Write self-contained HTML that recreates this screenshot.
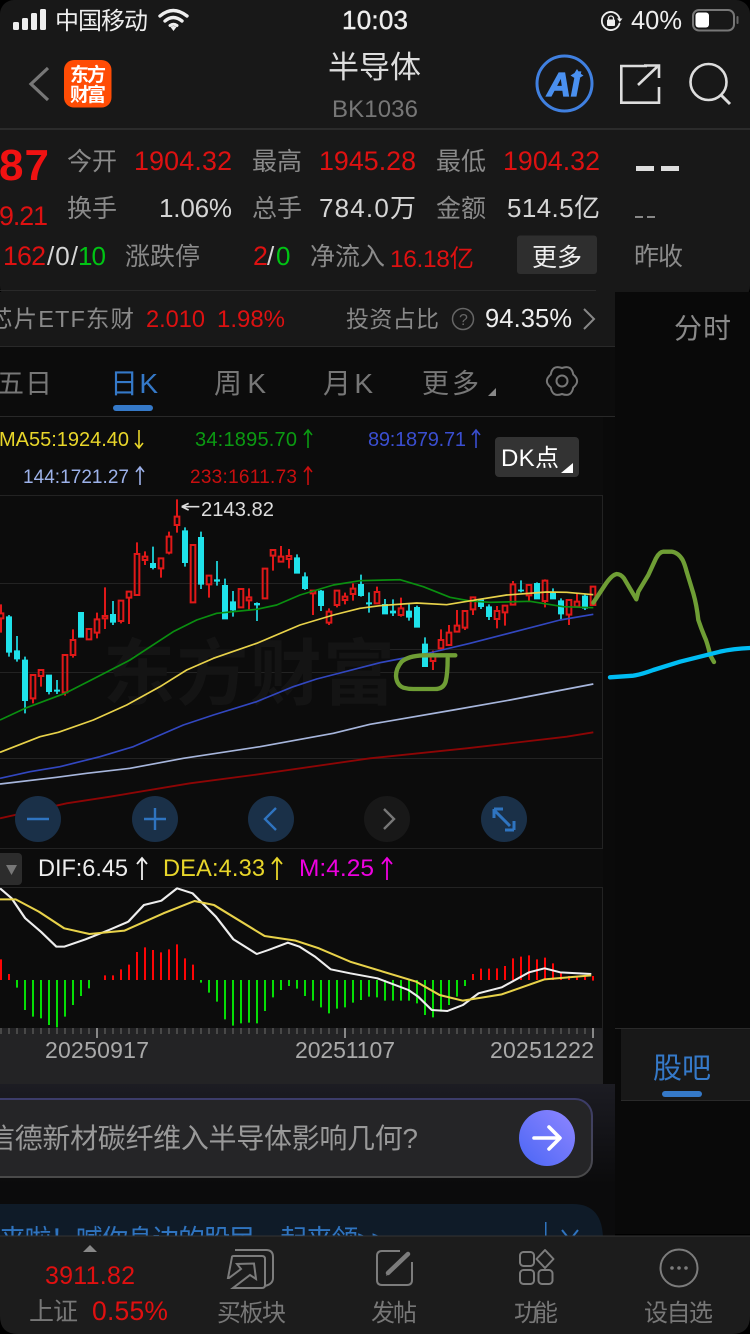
<!DOCTYPE html>
<html lang="zh"><head><meta charset="utf-8"><title>半导体</title>
<style>html,body{margin:0;padding:0;background:#000}svg{display:block}text{font-family:"Liberation Sans","Noto Sans CJK SC",sans-serif}</style></head>
<body>
<svg xmlns="http://www.w3.org/2000/svg" width="750" height="1334" viewBox="0 0 750 1334">
<rect width="750" height="1334" fill="#000"/>
<rect width="750" height="300" rx="14" fill="#181818"/>
<rect x="615" y="292" width="135" height="740" fill="#090909"/>
<rect x="0" y="292" width="615" height="54" fill="#181818"/>
<rect x="0" y="346" width="615" height="740" fill="#0c0c0c"/>
<rect x="603" y="417" width="12" height="667" fill="#0a0a0a"/>
<rect x="0" y="128" width="750" height="2" fill="#2b2b2b"/>
<rect x="0" y="290" width="596" height="1" fill="#292929"/>
<rect x="0" y="346" width="615" height="1" fill="#292929"/>
<rect x="0" y="416" width="615" height="1" fill="#292929"/>

<!-- status bar -->
<g fill="#eee">
<rect x="13" y="22" width="6" height="8" rx="1.5"/><rect x="22" y="18" width="6" height="12" rx="1.5"/><rect x="31" y="13" width="6" height="17" rx="1.5"/><rect x="40" y="9" width="6" height="21" rx="1.5"/>
<text x="55" y="29" font-size="24" textLength="93">中国移动</text>
<text x="342" y="29" font-size="26" textLength="66" stroke="#eee" stroke-width=".4">10:03</text>
<text x="631" y="29" font-size="25.500" textLength="51">40%</text>
</g>
<g fill="none" stroke="#eee" stroke-linecap="round">
<path d="M160 16Q173 5 187 16M165 21Q173 14 182 21" stroke-width="3.400"/>
<path d="M170 25.500Q173.500 23 177 25.500" stroke-width="3"/>
<path d="M619.500 18.500A9 9 0 1 0 619.500 23.500" stroke-width="1.800"/>
</g>
<path d="M173.500 31l-3-4q3-2 6 0z" fill="#eee"/>
<path d="M617 18.500H622.500L619.800 22z" fill="#eee"/>
<rect x="607" y="19.500" width="8" height="6.500" rx="1" fill="#eee"/>
<path d="M608.500 20V18.500a2.500 2.500 0 0 1 5 0V20" fill="none" stroke="#eee" stroke-width="1.300"/>
<rect x="693" y="10" width="41" height="20.500" rx="6" fill="none" stroke="#777" stroke-width="2"/>
<rect x="695.500" y="12.500" width="13.500" height="15" rx="3" fill="#fff"/>
<rect x="736.500" y="16" width="2" height="8" rx="1" fill="#666"/>

<!-- nav -->
<path d="M48 68L31 84L48 100" fill="none" stroke="#777" stroke-width="3.200"/>
<rect x="64" y="60" width="47.500" height="47.500" rx="10" fill="#ff4c05"/>
<text x="70" y="81" font-size="19" font-weight="700" fill="#fff" textLength="36">东方</text>
<text x="70" y="101" font-size="19" font-weight="700" fill="#fff" textLength="36">财富</text>
<text x="328" y="78" font-size="31" fill="#ddd" textLength="93">半导体</text>
<text x="332" y="117" font-size="24" fill="#777" textLength="86">BK1036</text>
<circle cx="564.500" cy="83.500" r="27.500" fill="none" stroke="#4080e0" stroke-width="3"/>
<text x="547" y="96" font-size="33" font-weight="700" font-style="italic" fill="#4a90f0" textLength="33" stroke="#4a90f0" stroke-width="1.200">Ai</text>
<path d="M577 69l2.500 4 4 2.500-4 2.500-2.500 4-2.500-4-4-2.500 4-2.500z" fill="#4a90f0"/>
<g fill="none" stroke="#ddd" stroke-width="2.600">
<path d="M647 66H621.300V102.700H659V87"/>
<path d="M638 85L658 66M644 65.500H659V78"/>
<circle cx="708.500" cy="82" r="18"/>
<path d="M721 95L730 104" stroke-width="3"/>
</g>

<!-- quote rows -->
<text x="-1" y="180" font-size="44" font-weight="700" fill="#f01212" textLength="50">87</text>
<g font-size="25" fill="#8a8a8a">
<text x="67" y="170" textLength="50">今开</text><text x="252" y="170" textLength="50">最高</text><text x="436" y="170" textLength="50">最低</text>
<text x="67" y="217" textLength="50">换手</text><text x="252" y="217" textLength="50">总手</text><text x="436" y="217" textLength="50">金额</text>
<text x="125" y="265" textLength="75">涨跌停</text><text x="310" y="265" textLength="75">净流入</text><text x="634" y="265" textLength="49">昨收</text>
</g>
<g font-size="26.800" fill="#dd1111">
<text x="134" y="170" textLength="98">1904.32</text><text x="319" y="170" textLength="97">1945.28</text><text x="503" y="170" textLength="97">1904.32</text>
<text x="-1" y="225" textLength="49">9.21</text>
<text x="3" y="265" textLength="43">162</text><text x="253" y="265" textLength="13">2</text>
<text x="390" y="267" font-size="24.500" textLength="84">16.18亿</text>
</g>
<g font-size="26" fill="#d5d5d5">
<text x="159" y="217" textLength="73">1.06%</text><text x="319" y="217" textLength="97">784.0万</text><text x="507" y="217" textLength="93">514.5亿</text>
<text x="47" y="265" textLength="31">/0/</text><text x="267" y="265" textLength="8">/</text>
</g>
<g font-size="26" fill="#00c414"><text x="78" y="265" textLength="28">10</text><text x="276" y="265" textLength="14">0</text></g>
<rect x="517" y="235.500" width="80" height="38.500" rx="3" fill="#2e2e2e"/>
<text x="532" y="266" font-size="25" fill="#eee" textLength="50">更多</text>
<rect x="636" y="166" width="18" height="5" fill="#ddd"/><rect x="661" y="166" width="18" height="5" fill="#ddd"/>
<rect x="635" y="216" width="8" height="2" fill="#888"/><rect x="647" y="216" width="8" height="2" fill="#888"/>

<!-- ETF row -->
<text x="-11" y="327" font-size="23.500" fill="#8a8a8a" textLength="145">芯片ETF东财</text>
<text x="146" y="327" font-size="23.600" fill="#dd1111" textLength="59">2.010</text>
<text x="217" y="327" font-size="24" fill="#dd1111" textLength="68">1.98%</text>
<text x="346" y="327" font-size="23" fill="#888" textLength="93">投资占比</text>
<circle cx="463" cy="319" r="10.500" fill="none" stroke="#666" stroke-width="1.500"/>
<text x="459" y="325" font-size="16" fill="#666">?</text>
<text x="485" y="327" font-size="25.500" fill="#eee" textLength="87">94.35%</text>
<path d="M584 309L594 319L584 329" fill="none" stroke="#888" stroke-width="2"/>
<text x="674" y="338" font-size="28" fill="#8a8a8a" textLength="57">分时</text>

<!-- tabs -->
<g font-size="27" fill="#777">
<text x="-3" y="393" textLength="55">五日</text>
<text x="214" y="393" font-size="28" textLength="52">周K</text>
<text x="323" y="393" font-size="28" textLength="50">月K</text>
<text x="422" y="393" textLength="57">更多</text>
</g>
<text x="110" y="393" font-size="28" fill="#3579c8" textLength="48">日K</text>
<rect x="113" y="405" width="40" height="6" rx="3" fill="#3579c8"/>
<path d="M496 388V396H488z" fill="#888"/>
<path d="M573.260 374.500Q571.500 364.550 562 368Q552.500 364.550 550.740 374.500Q543 381 550.740 387.500Q552.500 397.450 562 394Q571.500 397.450 573.260 387.500Q581 381 573.260 374.500Z" fill="none" stroke="#777" stroke-width="2"/>
<circle cx="562" cy="381" r="5.500" fill="none" stroke="#777" stroke-width="2"/>

<!-- MA legend -->
<g font-size="20">
<text x="-1" y="446" fill="#e8d62a" textLength="130">MA55:1924.40</text>
<text x="195" y="446" fill="#0b9a12" textLength="102">34:1895.70</text>
<text x="368" y="446" fill="#3a4ed0" textLength="98">89:1879.71</text>
<text x="23" y="483" fill="#9db2ea" font-size="19" textLength="106">144:1721.27</text>
<text x="190" y="483" fill="#c80f0f" font-size="19" textLength="107">233:1611.73</text>
</g>
<g fill="none" stroke-width="1.600">
<path d="M139 430V448M135 443L139 448L143 443" stroke="#e8d62a"/>
<path d="M308 430V448M304 435L308 430L312 435" stroke="#0b9a12"/>
<path d="M476 430V448M472 435L476 430L480 435" stroke="#3a4ed0"/>
<path d="M140 467V485M136 472L140 467L144 472" stroke="#9db2ea"/>
<path d="M308 467V485M304 472L308 467L312 472" stroke="#c80f0f"/>
</g>
<rect x="495" y="437" width="84" height="40" rx="4" fill="#333"/>
<text x="501" y="466" font-size="24" fill="#fff" textLength="58">DK点</text>
<path d="M573 463V473H561z" fill="#fff"/>

<!-- chart grid -->
<g fill="none" stroke="#232323" stroke-width="1">
<path d="M0 495.500H602.500V848.500H0M0 583.500H602.500M0 672.500H602.500M0 758.500H602.500M370 649.500H602.500"/>
<path d="M0 887.500H602.500V1028"/>
</g>
<text x="103" y="699" font-size="72" font-weight="700" fill="#141414" textLength="292">东方财富</text>

<!-- candles -->
<g transform="translate(0,490) scale(.33333)">
<path fill="none" stroke="#e01818" stroke-width="6" d="
M3 343V370M-4 370H10V385H-4ZM3 385V428
M99 552V555M92 555H106V625H92ZM99 625V640
M123 537V540M116 540H130V558H116ZM123 558V590
M188 495H202V607H188ZM195 607V617
M219 418V450M212 450H226V495H212ZM219 495V503
M260 417H274V448H260Z
M291 368V388M284 388H298V428H284ZM291 428V445
M315 292V378M308 378H322V385H308ZM315 385V417
M356 332H370V393H356ZM363 393V400
M387 302V305M380 305H394V323H380ZM387 323V402
M411 157V192M404 192H418V315H404Z
M435 184V200M428 200H442V210H428ZM435 210V225
M476 205H490V235H476ZM483 235V263
M507 125V140M500 140H514V188H500ZM507 188V193
M531 28V80M524 80H538V105H524ZM531 105V128
M572 165H586V337H572Z
M620 257H634V283H620ZM627 283V323
M716 297H730V352H716Z
M747 295V322M740 322H754V331H740ZM747 331V360
M788 236H802V325H788Z
M812 180H826V197H812ZM819 197V242
M843 168V200M836 200H850V215H836ZM843 215V218
M867 177V198M860 198H874V207H860ZM867 207V235
M932 302H946V310H932ZM939 310V375
M987 355V365M980 365H994V398H980ZM987 398V405
M1004 302H1018V345H1004ZM1011 345V352
M1035 308V320M1028 320H1042V330H1028ZM1035 330V343
M1059 280V296M1052 296H1066V312H1052ZM1059 312V332
M1131 290V306M1124 306H1138V340H1124Z
M1203 323V355M1196 355H1210V375H1196ZM1203 375V380
M1299 482V498M1292 498H1306V513H1292ZM1299 513V540
M1323 418V450M1316 450H1330V475H1316Z
M1347 405V428M1340 428H1354V465H1340Z
M1371 360V407M1364 407H1378V425H1364Z
M1388 363H1402V413H1388ZM1395 413V420
M1412 322H1426V358H1412ZM1419 358V375
M1491 348V363M1484 363H1498V387H1484ZM1491 387V415
M1508 347H1522V367H1508ZM1515 367V407
M1539 273V283M1532 283H1546V344H1532Z
M1580 285H1594V316H1580ZM1587 316V332
M1635 268V272M1628 272H1642V333H1628ZM1635 333V352
M1700 330H1714V374H1700ZM1707 374V405
M1731 312V335M1724 335H1738V350H1724Z
M1772 290H1786V345H1772Z"/>
<path fill="none" stroke="#1fe2ea" stroke-width="5" d="M27 375V500M51 438V515M75 500V670M147 555V613M171 570V612M243 367V442M339 333V405M459 170V238M555 112V230M603 125V297M651 213V287M675 266V387M699 303V380M771 337V393M891 193V250M915 247V300M963 300V363M1083 254V320M1107 307V368M1155 327V372M1179 328V378M1227 343V392M1251 347V412M1275 442V530M1443 330V357M1467 343V390M1563 271V307M1611 277V327M1659 295V327M1683 325V388M1755 312V360"/>
<path fill="#1fe2ea" stroke="#1fe2ea" stroke-width="2" d="M19 380h16V487h-16zM43 482h16V507h-16zM67 510h16V632h-16zM139 555h16V605h-16zM163 600h16V604h-16zM235 367h16V442h-16zM331 373h16V397h-16zM451 220h16V233h-16zM547 122h16V218h-16zM595 142h16V283h-16zM643 269h16V274h-16zM667 286h16V387h-16zM691 335h16V360h-16zM763 340h16V345h-16zM883 203h16V250h-16zM907 260h16V296h-16zM955 303h16V347h-16zM1075 283h16V317h-16zM1099 338h16V342h-16zM1147 343h16V372h-16zM1171 363h16V369h-16zM1219 363h16V382h-16zM1243 352h16V412h-16zM1267 462h16V530h-16zM1435 330h16V350h-16zM1459 350h16V380h-16zM1555 300h16V303h-16zM1603 280h16V327h-16zM1651 308h16V327h-16zM1675 332h16V372h-16zM1747 318h16V355h-16z"/>
<g fill="none" stroke-width="5" stroke-linejoin="round">
<polyline stroke="#8d0505" stroke-width="5.500" points="0,985 200,940 330,920 570,880 760,855 1110,805 1400,775 1700,740 1780,727"/>
<polyline stroke="#a7b6dc" points="0,882 170,862 260,850 390,835 550,805 780,770 1000,730 1110,703 1360,660 1530,630 1780,582"/>
<polyline stroke="#3247c0" points="0,865 90,845 180,830 300,800 400,770 550,705 640,675 770,635 880,590 950,567 1140,518 1275,492 1410,460 1680,390 1780,373"/>
<polyline stroke="#0a8f10" points="0,690 75,655 195,610 270,572 390,510 520,425 590,390 650,370 770,358 830,345 900,315 1000,285 1080,272 1200,269 1270,290 1350,322 1410,333 1470,337 1590,334 1690,350 1780,353"/>
<polyline stroke="#e8d24a" points="0,787 120,740 175,727 280,690 380,645 480,590 560,540 640,505 770,460 900,405 1000,375 1080,355 1140,347 1250,339 1340,344 1420,331 1520,315 1640,306 1700,307 1780,314"/>
</g>
<path d="M545 50H598M545 50L566 40M545 50L566 60" fill="none" stroke="#ddd" stroke-width="5"/>
</g>
<text x="201" y="516" font-size="20.200" fill="#ddd" textLength="73">2143.82</text>

<!-- zoom buttons -->
<g fill="#1a3048">
<circle cx="38" cy="819" r="23"/><circle cx="155" cy="819" r="23"/><circle cx="271" cy="819" r="23"/><circle cx="504" cy="819" r="23"/>
</g>
<circle cx="387" cy="819" r="23" fill="#181818"/>
<g fill="none" stroke="#2f74c0" stroke-width="2.400">
<path d="M27 819H49M144 819H166M155 808V830M276 808L265 819L276 830"/>
<path d="M494 810L510 826M494 809H503M494 809V818M514 830H505M514 830V821" stroke-width="3"/>
</g>
<path d="M384 809L394 819L384 829" fill="none" stroke="#777" stroke-width="2.400"/>

<!-- hand drawings -->
<g transform="translate(370,490) scale(.33333)" fill="none" stroke-linecap="round" stroke-linejoin="round">
<path stroke="#6f9e35" stroke-width="13" d="M670 338L705 285Q725 255 740 252Q752 252 762 265L799 328L805 305L835 255L858 205Q868 186 880 185H905Q925 188 938 210Q945 225 950 245L970 310Q980 345 985 390Q995 420 1008 450Q1018 480 1020 495L1032 516"/>
<path stroke="#6f9e35" stroke-width="13" d="M256 496H160Q115 498 95 515Q78 535 78 558Q80 585 100 593Q115 597 130 597H195Q220 597 227 575Q233 550 233 505"/>
<path stroke="#00bdf4" stroke-width="13" d="M720 562L790 557Q815 553 850 540L930 515L1050 485Q1090 476 1140 474"/>
</g>

<!-- MACD header -->
<rect x="-10" y="853" width="32" height="32" rx="4" fill="#2c2c2c"/>
<path d="M6 865H17L11.500 875z" fill="#777"/>
<g font-size="23.600">
<text x="38" y="876" fill="#eee" textLength="90">DIF:6.45</text>
<text x="163" y="876" fill="#e8d62a" textLength="102">DEA:4.33</text>
<text x="299" y="876" fill="#ee00e0" font-size="24.500" textLength="75">M:4.25</text>
</g>
<g fill="none" stroke-width="1.800">
<path d="M142 858V880M137 864L142 858L147 864" stroke="#eee"/>
<path d="M277 858V880M272 864L277 858L282 864" stroke="#e8d62a"/>
<path d="M387 858V880M382 864L387 858L392 864" stroke="#ee00e0"/>
</g>

<!-- MACD bars -->
<g transform="translate(0,850) scale(1,.33333)" fill="none" stroke-width="2">
<path stroke="#ff0505" d="M1 390V328M9 390V372M105 390V376M113 390V376M121 390V358M129 390V344M137 390V306M145 390V292M153 390V300M161 390V307M169 390V298M177 390V283M185 390V325M193 390V344M473 390V372M481 390V356M489 390V356M497 390V355M505 390V348M513 390V325M521 390V320M529 390V316M537 390V328M545 390V323M553 390V340M561 390V370M569 390V378M577 390V378M585 390V378M593 378V392"/>
<path stroke="#05dd05" d="M17 390V413M25 390V480M33 390V500M41 390V505M49 390V525M57 390V532M65 390V500M73 390V465M81 390V438M89 390V415M201 390V398M209 390V428M217 390V455M225 390V508M233 390V527M241 390V520M249 390V518M257 390V520M265 390V483M273 390V442M281 390V420M289 390V408M297 390V416M305 390V438M313 390V452M321 390V472M329 390V490M337 390V476M345 390V472M353 390V458M361 390V450M369 390V440M377 390V442M385 390V452M393 390V452M401 390V452M409 390V452M417 390V460M425 390V495M433 390V502M441 390V485M449 390V465M457 390V440M465 390V408"/>
</g>
<g transform="translate(0,850) scale(.389,.33333)" fill="none" stroke-width="6" stroke-linejoin="round">
<polyline stroke="#eee" points="0,115 30,145 65,205 105,245 145,290 165,290 220,268 280,240 330,215 370,165 415,152 455,115 495,130 555,200 600,268 660,312 690,300 740,278 770,290 810,320 850,358 900,370 970,385 1050,420 1075,440 1110,480 1150,483 1190,465 1230,430 1290,412 1360,367 1400,355 1440,367 1520,372"/>
<polyline stroke="#e8d24a" points="0,148 40,148 100,185 165,235 230,252 320,242 420,190 500,153 550,165 680,258 760,272 820,295 900,335 1070,395 1130,435 1190,452 1290,433 1400,388 1520,376"/>
</g>

<!-- date strip -->
<rect x="0" y="1028" width="603" height="56" fill="#232325"/>
<path d="M1 1028v6M9 1028v6M17 1028v6M25 1028v6M33 1028v6M41 1028v6M49 1028v6M57 1028v6M65 1028v6M73 1028v6M81 1028v6M89 1028v6M105 1028v6M113 1028v6M121 1028v6M129 1028v6M137 1028v6M145 1028v6M153 1028v6M161 1028v6M169 1028v6M177 1028v6M185 1028v6M193 1028v6M201 1028v6M209 1028v6M217 1028v6M225 1028v6M233 1028v6M241 1028v6M249 1028v6M257 1028v6M265 1028v6M273 1028v6M281 1028v6M289 1028v6M297 1028v6M305 1028v6M313 1028v6M321 1028v6M329 1028v6M337 1028v6M353 1028v6M361 1028v6M369 1028v6M377 1028v6M385 1028v6M393 1028v6M401 1028v6M409 1028v6M417 1028v6M425 1028v6M433 1028v6M441 1028v6M449 1028v6M457 1028v6M465 1028v6M473 1028v6M481 1028v6M489 1028v6M497 1028v6M505 1028v6M513 1028v6M521 1028v6M529 1028v6M537 1028v6M545 1028v6M553 1028v6M561 1028v6M569 1028v6M577 1028v6M585 1028v6" stroke="#555" stroke-width="1.500"/>
<path d="M97 1028v10M345 1028v10M593 1028v10" stroke="#aaa" stroke-width="1.500"/>
<g font-size="23" fill="#aaa">
<text x="45" y="1058" textLength="104">20250917</text>
<text x="295" y="1058" textLength="100">20251107</text>
<text x="490" y="1058" textLength="104">20251222</text>
</g>

<!-- right block: 股吧 -->
<rect x="615" y="1028" width="135" height="206" fill="#090909"/>
<rect x="621" y="1029" width="129" height="71" fill="#181818"/>
<rect x="621" y="1100" width="129" height="1" fill="#2a2a2a"/>
<rect x="615" y="1028" width="135" height="1" fill="#2a2a2a"/>
<text x="653" y="1078" font-size="29" fill="#3579c8" textLength="58">股吧</text>
<rect x="662" y="1091" width="40" height="6" rx="3" fill="#3579c8"/>

<!-- input area -->
<defs>
<linearGradient id="iw" x1="0" y1="0" x2="0" y2="1"><stop offset="0" stop-color="#1c1c23"/><stop offset="1" stop-color="#0b0b0c"/></linearGradient>
<linearGradient id="ib" x1="0" y1="0" x2="0" y2="1"><stop offset="0" stop-color="#3c3c6a"/><stop offset="1" stop-color="#4a4a4a"/></linearGradient>
<linearGradient id="ab" x1="0" y1="1" x2="1" y2="0"><stop offset="0" stop-color="#4a66f5"/><stop offset="1" stop-color="#8f86ff"/></linearGradient>
</defs>
<rect x="0" y="1084" width="615" height="100" fill="url(#iw)"/>
<rect x="0" y="1184" width="615" height="52" fill="#0b0b0c"/>
<rect x="-20" y="1099" width="612" height="78" rx="17" fill="#252527" stroke="url(#ib)" stroke-width="2"/>
<text x="-13" y="1148" font-size="28" fill="#999" textLength="431">信德新材碳纤维入半导体影响几何?</text>
<circle cx="547" cy="1138" r="28" fill="url(#ab)"/>
<path d="M534 1138H559M549 1127L560 1138L549 1149" fill="none" stroke="#fff" stroke-width="3.600" stroke-linecap="round" stroke-linejoin="round"/>

<!-- banner -->
<path d="M-5 1204H573Q603 1204 603 1240H-5z" fill="#0f1b28"/>
<text x="-1" y="1249" font-size="27" fill="#2f74c0" textLength="388">来啦！喊你身边的股民一起来领&gt;&gt;</text>
<rect x="545" y="1222" width="1.500" height="16" fill="#2f74c0"/>
<path d="M562 1230L570 1240L578 1230" fill="none" stroke="#2f74c0" stroke-width="2"/>

<!-- footer -->
<path d="M0 1236H750V1316Q750 1334 732 1334H18Q0 1334 0 1316z" fill="#1c1c1c"/>
<rect x="0" y="1235.500" width="750" height="1" fill="#333"/>
<path d="M83 1252L90 1245L97 1252z" fill="#888"/>
<text x="45" y="1284" font-size="25" fill="#e01010" textLength="90">3911.82</text>
<text x="29" y="1320" font-size="25" fill="#777" textLength="49">上证</text>
<text x="92" y="1320" font-size="26.500" fill="#e01010" textLength="76">0.55%</text>
<g font-size="24" fill="#777">
<text x="217" y="1321" textLength="69">买板块</text>
<text x="371" y="1321" textLength="46">发帖</text>
<text x="514" y="1321" textLength="44">功能</text>
<text x="644" y="1321" textLength="69">设自选</text>
</g>
<g fill="none" stroke="#7c7c7c" stroke-width="2">
<path d="M235 1250H266Q273 1250 273 1257V1278Q273 1284 265 1286"/>
<path d="M232 1257Q232 1256 234 1256H262Q265 1256 265 1259V1285Q265 1288 262 1288H233L250 1275L256 1279L254 1263.500L237 1264L241 1269L229 1278L228 1278L232 1257"/>
<path d="M400 1251H382Q377 1251 377 1256V1280Q377 1285 382 1285H407Q412 1285 412 1280V1262"/>
<rect x="520" y="1252" width="14" height="14" rx="3.500"/>
<path d="M545 1250L553.500 1259L545 1268L536.500 1259z" stroke-linejoin="round"/>
<rect x="520" y="1270" width="14" height="14" rx="3.500"/>
<rect x="538.500" y="1270" width="14" height="14" rx="3.500"/>
<circle cx="679" cy="1268" r="18.500"/>
</g>
<path d="M388 1273L408 1254" stroke="#7c7c7c" stroke-width="4.500" stroke-linecap="round"/>
<path d="M386 1276L388 1270L391 1273z" fill="#7c7c7c"/>
<g fill="#7c7c7c"><circle cx="672" cy="1268" r="1.800"/><circle cx="679" cy="1268" r="1.800"/><circle cx="686" cy="1268" r="1.800"/></g>
</svg>
</body></html>
